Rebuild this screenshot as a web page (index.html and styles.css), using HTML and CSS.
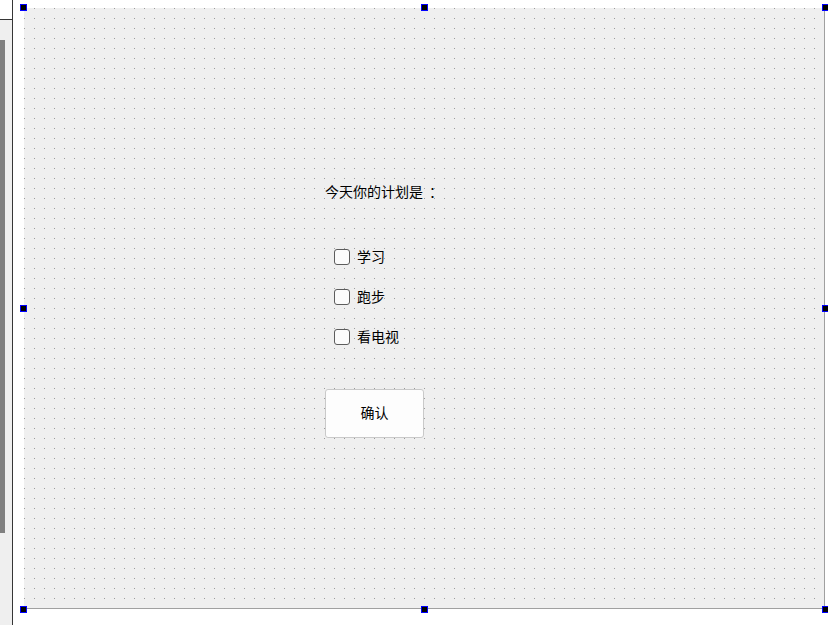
FILE: index.html
```html
<!DOCTYPE html>
<html lang="zh-CN">

  <head>
    <meta charset="UTF-8">
    <title>Form</title>
    <link rel="stylesheet" href="styles.css">
  </head>

  <body>
    <div class="side">
      <div class="side-top"></div>
      <div class="side-body">
        <div class="side-bar"></div>
      </div>
    </div>

    <div class="canvas">
      <div class="form">
        <div class="title">今天你的计划是<span class="colon">：</span></div>

        <div class="checks">
          <label class="check"><span class="box"></span><span class="txt">学习</span></label>
          <label class="check"><span class="box"></span><span class="txt">跑步</span></label>
          <label class="check"><span class="box"></span><span class="txt">看电视</span></label>
        </div>

        <div class="btn">确认</div>

        <!-- 選取控制點 -->
        <span class="handle h-tl"></span>
        <span class="handle h-tm"></span>
        <span class="handle h-tr"></span>
        <span class="handle h-ml"></span>
        <span class="handle h-mr"></span>
        <span class="handle h-bl"></span>
        <span class="handle h-bm"></span>
        <span class="handle h-br"></span>
      </div>
    </div>
  </body>

</html>
```

FILE: styles.css
```css
* {
  box-sizing: border-box;
}

body {
  margin: 0;
  width: 828px;
  height: 625px;
  overflow: hidden;
  display: flex;
  background: #fff;
  font-family: "Noto Sans CJK SC", "Noto Sans", sans-serif;
  font-size: 14px;
  color: #000;
}

.side {
  width: 13px;
  height: 625px;
  display: flex;
  flex-direction: column;
  border-right: 1px solid #363636;
}

.side-top {
  height: 20px;
  background: #fff;
  border-bottom: 1px solid #363636;
}

.side-body {
  flex: 1;
  background: #efefef;
  padding-top: 20px;
}

.side-bar {
  width: 5px;
  height: 493px;
  background: #808080;
}

.canvas {
  padding: 8px 0 0 11px;
}

.form {
  position: relative;
  width: 801px;
  height: 601px;
  border-right: 1px solid #a0a0a0;
  border-bottom: 1px solid #a0a0a0;
  padding: 173px 0 0 301px;
  background-color: #efefef;
  /* 格點 */
  background-image:
    linear-gradient(to bottom, transparent 1px, #efefef 1px),
    linear-gradient(to right, #9a9a9a 1px, #efefef 1px);
  background-size: 10px 10px;
}

.title {
  line-height: 20px;
  white-space: nowrap;
}

/* 冒號往右移，像置中一樣 */
.colon {
  margin-left: 6px;
}

.checks {
  margin: 46px 0 0 9px;
  display: flex;
  flex-direction: column;
  gap: 20px;
}

.check {
  display: flex;
  align-items: center;
  gap: 7px;
  height: 20px;
  line-height: 20px;
}

.check .txt {
  padding-bottom: 2px;
}

.box {
  width: 16px;
  height: 16px;
  border: 1px solid #5c5c5c;
  border-radius: 3px;
  background: #fbfbfb;
}

.btn {
  margin-top: 42px;
  width: 99px;
  height: 49px;
  display: flex;
  align-items: center;
  justify-content: center;
  padding-bottom: 3px;
  border: 1px solid #c9c9c9;
  border-radius: 3px;
  background: #fdfdfd;
}

.handle {
  position: absolute;
  width: 7px;
  height: 7px;
  background: #000;
  border: 1px solid #0000ff;
}

.h-tl { left: -4px; top: -4px; }
.h-tm { left: 397px; top: -4px; }
.h-tr { left: 798px; top: -4px; }
.h-ml { left: -4px; top: 297px; }
.h-mr { left: 798px; top: 297px; }
.h-bl { left: -4px; top: 598px; }
.h-bm { left: 397px; top: 598px; }
.h-br { left: 798px; top: 598px; }
```
